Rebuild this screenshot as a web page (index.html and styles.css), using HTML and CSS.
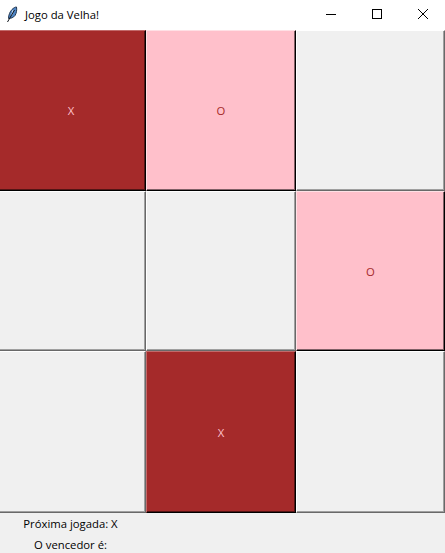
FILE: index.html
```html
<!DOCTYPE html>
<html lang="en">
<head>
    <meta charset="UTF-8">
    <meta name="viewport" content="width=device-width, initial-scale=1.0">
    <title>Jogo da Velha!</title>
    <link rel="stylesheet" href="styles.css">
</head>
<body>
    <div class="titlebar">
        <svg class="app-icon" width="16" height="16" viewBox="0 0 16 16">
            <path d="M4.500 12.500 C4.500 9 6 5.500 8 3.500 C9.500 2 11 1 12.500 1 C13 4 12.500 7 11 9.500 C9.500 11.500 7 12.500 4.500 12.500 Z" fill="#4f86c6" stroke="#1f3550" stroke-width="1"/>
            <path d="M9 4 C8.500 6 8 8 7.500 9.500" stroke="#cfe2f5" stroke-width="1" fill="none"/>
            <path d="M3.500 16 L10.500 4" stroke="#10161c" stroke-width="1" fill="none"/>
        </svg>
        <span class="title">Jogo da Velha!</span>
        <div class="win-buttons">
            <svg class="win-btn" width="46" height="30" viewBox="0 0 46 30"><path d="M18 14.500 H28" stroke="#000" stroke-width="1"/></svg>
            <svg class="win-btn" width="46" height="30" viewBox="0 0 46 30"><rect x="18.500" y="9.500" width="9" height="9" fill="none" stroke="#000" stroke-width="1"/></svg>
            <svg class="win-btn" width="46" height="30" viewBox="0 0 46 30"><path d="M18 9 L28 19 M28 9 L18 19" stroke="#000" stroke-width="1"/></svg>
        </div>
    </div>

    <div class="board">
        <div class="cell cell-x">X</div>
        <div class="cell cell-o">O</div>
        <div class="cell"></div>
        <div class="cell"></div>
        <div class="cell"></div>
        <div class="cell cell-o">O</div>
        <div class="cell"></div>
        <div class="cell cell-x">X</div>
        <div class="cell"></div>
    </div>

    <div class="status">
        <div class="label">Próxima jogada: X</div>
        <div class="label">O vencedor é:</div>
    </div>
</body>
</html>
```

FILE: styles.css
```css
html, body {
    margin: 0;
    padding: 0;
}

body {
    width: 445px;
    height: 553px;
    overflow: hidden;
    background-color: #f0f0f0;
    font-family: "Open Sans", "Noto Sans", sans-serif;
    font-size: 11.3px;
    color: #000;
}

.titlebar {
    height: 30px;
    background-color: #fff;
    display: flex;
    align-items: center;
}

.app-icon {
    margin-left: 4px;
    margin-bottom: 3px;
}

.title {
    margin-left: 5px;
    margin-bottom: 1px;
}

.win-buttons {
    display: flex;
    margin-left: auto;
    margin-right: -1px;
}

.win-btn {
    display: block;
}

/* first column runs a little past the left edge of the window */
.board {
    display: grid;
    grid-template-columns: 150px 150px 149px;
    grid-template-rows: 161px 160px 162px;
    margin-left: -4px;
}

.cell {
    display: flex;
    align-items: center;
    justify-content: center;
    box-sizing: border-box;
    background-color: #f0f0f0;
    border-top: 1px solid #fff;
    border-left: 1px solid #fff;
    border-right: 1px solid #696969;
    border-bottom: 1px solid #696969;
    box-shadow: inset -1px -1px 0 #a0a0a0;
}

.cell-x {
    background-color: #a52a2a;
    color: #ffc0cb;
    border-top-color: #c26a6a;
    border-left-color: #c26a6a;
    border-right-color: #000;
    border-bottom-color: #000;
    box-shadow: inset -1px -1px 0 #531515;
}

.cell-o {
    background-color: #ffc0cb;
    color: #a52a2a;
    border-top-color: #ffe0e5;
    border-left-color: #ffe0e5;
    border-right-color: #000;
    border-bottom-color: #000;
    box-shadow: inset -1px -1px 0 #806066;
}

.status {
    width: 141px;
}

.label {
    height: 21px;
    line-height: 21px;
    text-align: center;
    white-space: nowrap;
}
```
